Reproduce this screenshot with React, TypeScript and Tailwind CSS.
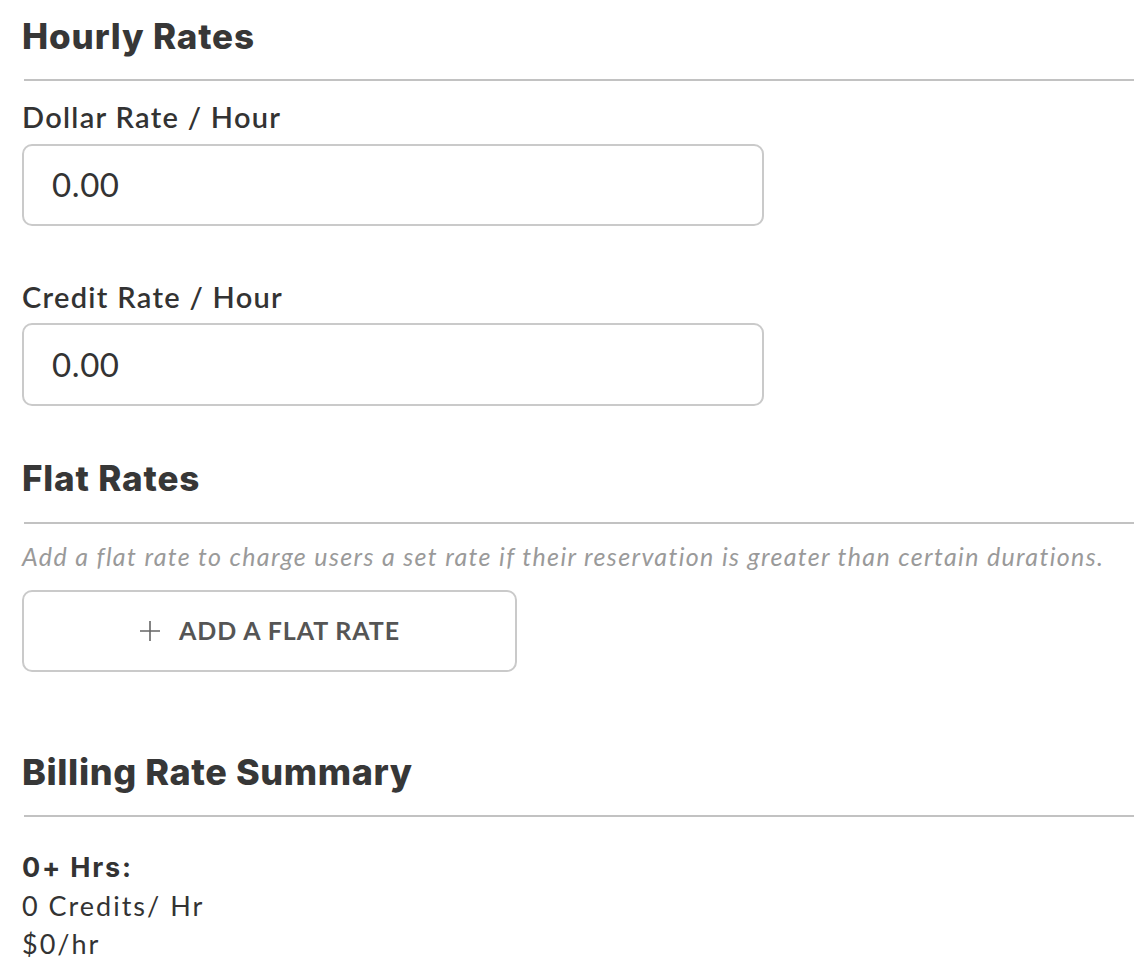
import React from "react";

export default function App() {
  return (
    <div className="min-h-[980px] w-[1134px] bg-white pl-[22px] pt-[15px] text-[#333333]" style={{ fontFamily: "Lato, 'Noto Sans', sans-serif" }}>
      <h2 className="font-['Inter',sans-serif] text-[35px] font-extrabold leading-[42px] tracking-[0.85px] text-[#373737]">Hourly Rates</h2>
      <div className="ml-[2px] mt-[22px] h-[2px] bg-[#c2c2c2]" />

      <label className="mt-[19px] block text-[29px] font-semibold leading-[34px] tracking-[1.3px] text-[#333]">Dollar Rate / Hour</label>
      <div className="mt-[10px] flex h-[82px] w-[742px] items-center rounded-[10px] border-2 border-[#cacaca] pl-[28px] text-[33px] tracking-[0.6px] text-[#333]">
        0.00
      </div>

      <label className="mt-[54px] block text-[29px] font-semibold leading-[34px] tracking-[1.3px] text-[#333]">Credit Rate / Hour</label>
      <div className="mt-[9px] flex h-[83px] w-[742px] items-center rounded-[10px] border-2 border-[#cacaca] pl-[28px] text-[33px] tracking-[0.6px] text-[#333]">
        0.00
      </div>

      <h2 className="mt-[51px] font-['Inter',sans-serif] text-[35px] font-extrabold leading-[42px] tracking-[0.85px] text-[#373737]">Flat Rates</h2>
      <div className="ml-[2px] mt-[23px] h-[2px] bg-[#c2c2c2]" />
      <p className="mt-[17px] text-[25px] italic leading-[30px] tracking-[1.35px] text-[#9a9a9a]">
        Add a flat rate to charge users a set rate if their reservation is greater than certain durations.
      </p>
      <button className="mt-[19px] flex h-[82px] w-[495px] items-center justify-center gap-[18px] rounded-[10px] border-2 border-[#cacaca] bg-white">
        <svg width="22" height="22" viewBox="0 0 22 22" className="shrink-0">
          <path d="M11 1v20M1 11h20" stroke="#666" strokeWidth="1.6" fill="none" />
        </svg>
        <span className="text-[25px] font-bold tracking-[0.9px] text-[#555]">ADD A FLAT RATE</span>
      </button>

      <h2 className="mt-[79px] font-['Inter',sans-serif] text-[36px] font-extrabold leading-[42px] tracking-[0.6px] text-[#373737]">Billing Rate Summary</h2>
      <div className="ml-[2px] mt-[22px] h-[2px] bg-[#c2c2c2]" />

      <div className="mt-[32px] text-[27px] leading-[38px] tracking-[2px] text-[#333]">
        <div className="font-['Inter',sans-serif] text-[27px] font-bold tracking-[1.8px]">0+ Hrs:</div>
        <div>0 Credits/ Hr</div>
        <div>$0/hr</div>
      </div>
    </div>
  );
}
